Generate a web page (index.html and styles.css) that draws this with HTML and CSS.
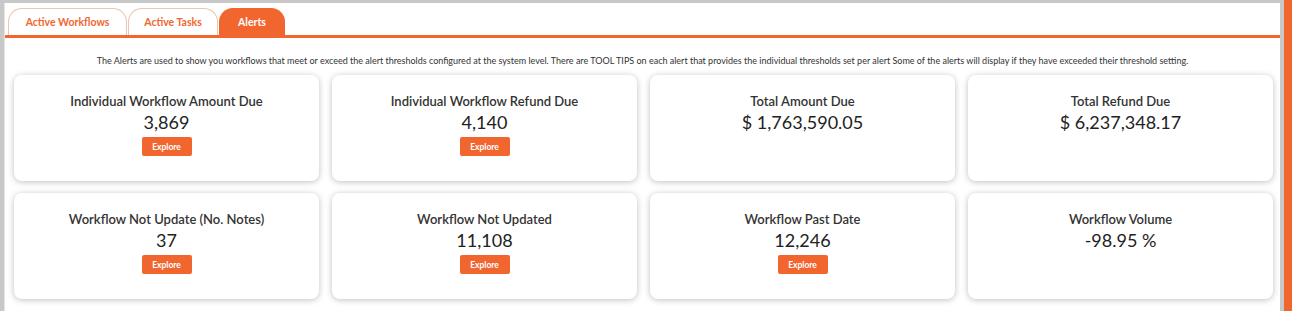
FILE: index.html
```html
<!DOCTYPE html>
<html lang="en">
<head>
    <meta charset="UTF-8">
    <meta name="viewport" content="width=device-width, initial-scale=1.0">
    <title>Alerts</title>
    <link rel="stylesheet" href="styles.css">
</head>
<body>
    <div class="frame">
        <div class="panel">
            <!-- Tabs -->
            <nav class="tabs">
                <div class="tab">Active Workflows</div>
                <div class="tab">Active Tasks</div>
                <div class="tab active">Alerts</div>
            </nav>

            <p class="intro">The Alerts are used to show you workflows that meet or exceed the alert thresholds configured at the system level. There are TOOL TIPS on each alert that provides the individual thresholds set per alert Some of the alerts will display if they have exceeded their threshold setting.</p>

            <!-- Alert cards -->
            <div class="grid">
                <div class="card">
                    <h3>Individual Workflow Amount Due</h3>
                    <div class="value">3,869</div>
                    <button>Explore</button>
                </div>
                <div class="card">
                    <h3>Individual Workflow Refund Due</h3>
                    <div class="value">4,140</div>
                    <button>Explore</button>
                </div>
                <div class="card">
                    <h3>Total Amount Due</h3>
                    <div class="value">$ 1,763,590.05</div>
                </div>
                <div class="card">
                    <h3>Total Refund Due</h3>
                    <div class="value">$ 6,237,348.17</div>
                </div>
                <div class="card">
                    <h3>Workflow Not Update (No. Notes)</h3>
                    <div class="value">37</div>
                    <button>Explore</button>
                </div>
                <div class="card">
                    <h3>Workflow Not Updated</h3>
                    <div class="value">11,108</div>
                    <button>Explore</button>
                </div>
                <div class="card">
                    <h3>Workflow Past Date</h3>
                    <div class="value">12,246</div>
                    <button>Explore</button>
                </div>
                <div class="card">
                    <h3>Workflow Volume</h3>
                    <div class="value">-98.95 %</div>
                </div>
            </div>
        </div>
        <div class="edge"></div>
    </div>
</body>
</html>
```

FILE: styles.css
```css
* {
    margin: 0;
    padding: 0;
    box-sizing: border-box;
}

body {
    font-family: Lato, 'Open Sans', sans-serif;
    background: #c8c8c8;
    color: #333;
    height: 311px;
    overflow: hidden;
}

.frame {
    display: flex;
    height: 311px;
    padding-top: 3px;
}

.panel {
    flex: 1;
    background: #fff;
    margin-left: 4px;
    border-left: 1px solid #e4e4e4;
}

.edge {
    width: 8px;
    margin-left: 4px;
    margin-top: -3px;
    background: #f1662f;
}

/* Tabs */
.tabs {
    display: flex;
    align-items: flex-end;
    height: 35px;
    padding-left: 3px;
    border-bottom: 3px solid #f1662f;
}

.tab {
    height: 27px;
    display: flex;
    align-items: center;
    justify-content: center;
    white-space: nowrap;
    font-size: 10.5px;
    font-weight: 700;
    color: #f1662f;
    border: 1px solid #eec3b0;
    border-bottom: none;
    border-radius: 14px 14px 0 0;
    margin-right: 1px;
}

.tab:nth-child(1) { width: 119px; }
.tab:nth-child(2) { width: 90px; }
.tab:nth-child(3) { width: 66px; }

.tab.active {
    background: #f1662f;
    color: #fff;
    border-color: #f1662f;
}

.intro {
    text-align: center;
    font-size: 9px;
    color: #333;
    padding: 17px 0 8px;
    line-height: 12px;
}

/* Cards */
.grid {
    display: grid;
    grid-template-columns: repeat(4, 305px);
    gap: 12px 13px;
    padding-left: 9px;
}

.card {
    height: 106px;
    background: #fff;
    border-radius: 8px;
    box-shadow: 0 1px 6px rgba(0, 0, 0, 0.25);
    display: flex;
    flex-direction: column;
    align-items: center;
    padding-top: 18px;
}

.card h3 {
    font-size: 13px;
    font-weight: 600;
    line-height: 16px;
    color: #333;
}

.card .value {
    font-size: 18px;
    line-height: 22px;
    margin-top: 2px;
    color: #222;
}

.card button {
    margin-top: 4px;
    width: 50px;
    height: 19px;
    border: none;
    border-radius: 2px;
    background: #f1662f;
    color: #fff;
    font-family: inherit;
    font-size: 8.5px;
    font-weight: 700;
}
```
